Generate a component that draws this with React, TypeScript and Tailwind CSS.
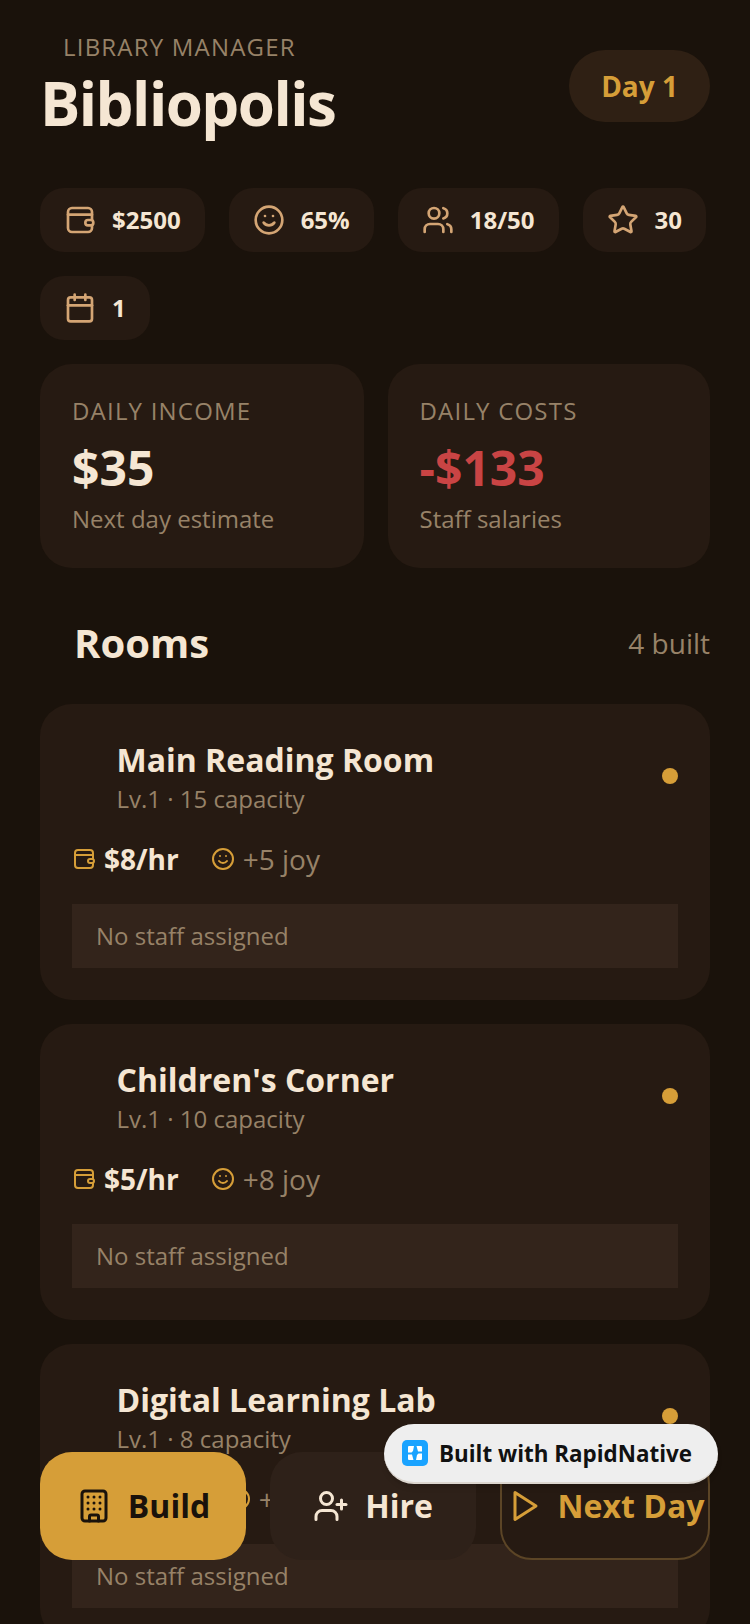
import { Building, Calendar, Smile, Star, UserPlus, Users } from "lucide-react";
import type { LucideIcon } from "lucide-react";

type Room = {
  name: string;
  capacity: number;
  rate: number;
  joy: number;
};

const rooms: Room[] = [
  { name: "Main Reading Room", capacity: 15, rate: 8, joy: 5 },
  { name: "Children's Corner", capacity: 10, rate: 5, joy: 8 },
  { name: "Digital Learning Lab", capacity: 8, rate: 15, joy: 6 },
];

function WalletIcon({ size, className }: { size: number; className?: string }) {
  return (
    <svg width={size} height={size} viewBox="0 0 24 24" fill="none" stroke="currentColor" strokeWidth="2" strokeLinecap="round" strokeLinejoin="round" className={className}>
      <rect x="3" y="3" width="18" height="18" rx="3" />
      <path d="M3 8h18" />
      <rect x="16" y="12" width="6" height="4" rx="2" className="fill-[#261a12]" />
    </svg>
  );
}

function StatChip({ icon: Icon, value }: { icon: LucideIcon | typeof WalletIcon; value: string }) {
  return (
    <div className="flex h-16 items-center gap-4 rounded-3xl bg-[#261a12] px-6">
      <Icon size={32} className="text-[#d4a574]" />
      <span className="text-2xl leading-8 font-bold text-[#f5e6d3]">{value}</span>
    </div>
  );
}

function SummaryCard({ label, value, note, danger }: { label: string; value: string; note: string; danger?: boolean }) {
  return (
    <div className="flex-1 rounded-[32px] bg-[#261a12] px-8 pt-[30px] pb-[33px] first:w-[323.5px] first:flex-none">
      <div className="text-2xl leading-[33px] tracking-[1.2px] text-[#978268]">{label}</div>
      <div className={`mt-2 text-5xl leading-[65px] font-bold ${danger ? "text-[#c94444]" : "text-[#f5e6d3]"}`}>{value}</div>
      <div className="mt-0.5 text-2xl leading-[33px] text-[#978268]">{note}</div>
    </div>
  );
}

function RoomCard({ room }: { room: Room }) {
  return (
    <div className="rounded-[32px] bg-[#261a12] px-8 pt-[34px] pb-8">
      <div className="flex items-center justify-between">
        <div className="pl-[44.5px]">
          <div className="text-[32px] leading-[44px] font-bold text-[#f5e6d3]">{room.name}</div>
          <div className="text-2xl leading-[33px] text-[#978268]">
            Lv.1 · {room.capacity} capacity
          </div>
        </div>
        <div className="mb-0.5 h-4 w-4 rounded-full bg-[#d69e38]" />
      </div>
      <div className="mt-[25px] flex items-center gap-8">
        <div className="flex items-center gap-2">
          <WalletIcon size={24} className="text-[#d69e38]" />
          <span className="text-[28px] leading-[38px] font-bold text-[#f5e6d3]">${room.rate}/hr</span>
        </div>
        <div className="flex items-center gap-2">
          <Smile size={24} className="text-[#d69e38]" />
          <span className="text-[28px] leading-[38px] text-[#978268]">+{room.joy} joy</span>
        </div>
      </div>
      <div className="mt-[26px] flex h-16 items-center bg-[#33241b] px-6 text-2xl text-[#978268]">No staff assigned</div>
    </div>
  );
}

export default function App() {
  return (
    <main className="relative h-[1624px] w-[750px] overflow-hidden bg-[#1a120b] font-['Open_Sans',sans-serif]">
      <div className="px-10 pt-[30px]">
        <div className="flex items-start justify-between">
          <div>
            <div className="pl-[23px] text-2xl leading-[33px] tracking-[1.2px] text-[#978268]">LIBRARY MANAGER</div>
            <h1 className="mt-0.5 text-[60px] leading-[76px] font-bold tracking-[-1.5px] text-[#f5e6d3]">Bibliopolis</h1>
          </div>
          <div className="mt-5 flex h-[72px] items-center rounded-[36px] bg-[#2f2014] px-8 text-[28px] font-bold text-[#d69e38]">
            Day 1
          </div>
        </div>

        <div className="mt-[47px] flex flex-wrap gap-6">
          <StatChip icon={WalletIcon} value="$2500" />
          <StatChip icon={Smile} value="65%" />
          <StatChip icon={Users} value="18/50" />
          <StatChip icon={Star} value="30" />
          <StatChip icon={Calendar} value="1" />
        </div>

        <div className="mt-6 flex gap-6">
          <SummaryCard label="DAILY INCOME" value="$35" note="Next day estimate" />
          <SummaryCard label="DAILY COSTS" value="-$133" note="Staff salaries" danger />
        </div>

        <div className="mt-12 flex items-center justify-between">
          <h2 className="pl-[34px] text-[40px] leading-[54px] font-bold text-[#f5e6d3]">Rooms</h2>
          <span className="text-[28px] text-[#978268]">4 built</span>
        </div>

        <div className="mt-[34px] flex flex-col gap-6">
          {rooms.map((room) => (
            <RoomCard key={room.name} room={room} />
          ))}
        </div>
      </div>

      <div className="absolute top-[1452px] left-10 flex w-[670px] gap-6">
        <button type="button" className="flex h-[108px] w-[206px] items-center justify-center gap-4 rounded-[32px] bg-[#d69e38] text-[32px] font-bold text-[#1a120b]">
          <Building size={36} />
          Build
        </button>
        <button type="button" className="flex h-[108px] w-[206px] items-center justify-center gap-4 rounded-[32px] bg-[#2e2119] text-[32px] font-bold text-[#f5e6d3]">
          <UserPlus size={36} />
          Hire
        </button>
        <button type="button" className="flex h-[108px] w-[210px] items-center justify-center gap-4 rounded-[32px] border-2 border-[#5c4526] bg-[#261a12] text-[32px] font-bold whitespace-nowrap text-[#d69e38]">
          <svg width="36" height="36" viewBox="0 0 24 24" fill="none" stroke="currentColor" strokeWidth="2" strokeLinejoin="round">
            <polygon points="6 3 20 12 6 21" />
          </svg>
          Next Day
        </button>
      </div>

      <div className="absolute top-[1424px] left-[384px] flex h-[60px] w-[334px] items-center gap-[11px] rounded-[30px] border-b-2 border-[#dcd6cf] bg-[#eeeeee] pl-[18px] shadow-md">
        <svg width="26" height="26" viewBox="0 0 26 26">
          <rect width="26" height="26" rx="5" fill="#1aa3ff" />
          <path d="M6 7a1 1 0 0 1 1-1h5l-1 5-1.5 1.5H6zM20 19a1 1 0 0 1-1 1h-5l1-5 1.5-1.5H20z" fill="#ffffff" />
          <path d="M14.5 6H19a1 1 0 0 1 1 1v4.5h-4zM11.5 20H7a1 1 0 0 1-1-1v-4.5h4z" fill="#ffffff" />
        </svg>
        <span className="mt-0.5 text-[22.4px] font-bold text-[#111111]">Built with RapidNative</span>
      </div>
    </main>
  );
}
